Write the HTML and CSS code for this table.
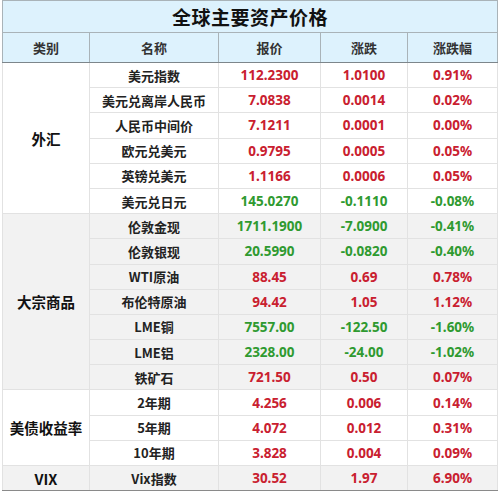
FILE: index.html
```html
<!DOCTYPE html>
<html lang="zh">
<head>
<meta charset="utf-8">
<link rel="stylesheet" href="styles.css">
</head>
<body>
<table class="grid">
  <colgroup>
    <col class="c1"><col class="c2"><col class="c3"><col class="c4"><col class="c5">
  </colgroup>
  <thead>
    <tr class="title"><th colspan="5">全球主要资产价格</th></tr>
    <tr class="head"><th>类别</th><th>名称</th><th>报价</th><th>涨跌</th><th>涨跌幅</th></tr>
  </thead>
  <tbody class="g-white">
    <tr><td class="cat" rowspan="6">外汇</td><td class="name">美元指数</td><td class="up">112.2300</td><td class="up">1.0100</td><td class="up">0.91%</td></tr>
    <tr><td class="name">美元兑离岸人民币</td><td class="up">7.0838</td><td class="up">0.0014</td><td class="up">0.02%</td></tr>
    <tr><td class="name">人民币中间价</td><td class="up">7.1211</td><td class="up">0.0001</td><td class="up">0.00%</td></tr>
    <tr><td class="name">欧元兑美元</td><td class="up">0.9795</td><td class="up">0.0005</td><td class="up">0.05%</td></tr>
    <tr><td class="name">英镑兑美元</td><td class="up">1.1166</td><td class="up">0.0006</td><td class="up">0.05%</td></tr>
    <tr><td class="name">美元兑日元</td><td class="down">145.0270</td><td class="down">-0.1110</td><td class="down">-0.08%</td></tr>
  </tbody>
  <tbody class="g-gray">
    <tr><td class="cat" rowspan="7">大宗商品</td><td class="name">伦敦金现</td><td class="down">1711.1900</td><td class="down">-7.0900</td><td class="down">-0.41%</td></tr>
    <tr><td class="name">伦敦银现</td><td class="down">20.5990</td><td class="down">-0.0820</td><td class="down">-0.40%</td></tr>
    <tr><td class="name">WTI原油</td><td class="up">88.45</td><td class="up">0.69</td><td class="up">0.78%</td></tr>
    <tr><td class="name">布伦特原油</td><td class="up">94.42</td><td class="up">1.05</td><td class="up">1.12%</td></tr>
    <tr><td class="name">LME铜</td><td class="down">7557.00</td><td class="down">-122.50</td><td class="down">-1.60%</td></tr>
    <tr><td class="name">LME铝</td><td class="down">2328.00</td><td class="down">-24.00</td><td class="down">-1.02%</td></tr>
    <tr><td class="name">铁矿石</td><td class="up">721.50</td><td class="up">0.50</td><td class="up">0.07%</td></tr>
  </tbody>
  <tbody class="g-white">
    <tr><td class="cat" rowspan="3">美债收益率</td><td class="name">2年期</td><td class="up">4.256</td><td class="up">0.006</td><td class="up">0.14%</td></tr>
    <tr><td class="name">5年期</td><td class="up">4.072</td><td class="up">0.012</td><td class="up">0.31%</td></tr>
    <tr><td class="name">10年期</td><td class="up">3.828</td><td class="up">0.004</td><td class="up">0.09%</td></tr>
  </tbody>
  <tbody class="g-gray last">
    <tr><td class="cat">VIX</td><td class="name">Vix指数</td><td class="up">30.52</td><td class="up">1.97</td><td class="up">6.90%</td></tr>
  </tbody>
</table>
</body>
</html>
```
FILE: styles.css
```css
html, body {
  margin: 0;
  padding: 0;
  background: #ffffff;
}
body {
  padding: 0 0 0 2px;
  font-family: "Noto Sans", "Noto Sans CJK SC", sans-serif;
}
.grid {
  border-collapse: collapse;
  table-layout: fixed;
  width: 495px;
}
.c1 { width: 87px; }
.c2 { width: 129px; }
.c3 { width: 102px; }
.c4 { width: 87px; }
.c5 { width: 90px; }

.grid th, .grid td {
  padding: 0;
  text-align: center;
  vertical-align: middle;
  white-space: nowrap;
  overflow: hidden;
}
.title th {
  height: 31px;
  background: #ddf2fd;
  border: 1px solid #a9b3b8;
  font-family: "Noto Sans CJK SC", sans-serif;
  font-size: 19px;
  font-weight: 700;
  color: #111;
  letter-spacing: 0.5px;
}
.head th {
  height: 29px;
  background: #ddf2fd;
  border: 1px solid #a9b3b8;
  border-bottom: 1px solid #7d868b;
  font-family: "Noto Sans CJK SC", sans-serif;
  font-size: 13px;
  font-weight: 700;
  color: #333;
}
.grid td {
  height: 24.2px;
  border: 1px solid #e2e2e2;
  font-size: 13.5px;
  font-weight: 700;
}
.g-white td { background: #ffffff; }
.g-gray td { background: #f2f2f2; }
.grid td.name {
  font-family: "Noto Sans CJK SC", sans-serif;
  font-size: 13px;
  color: #222;
}
.grid td.cat {
  font-family: "Noto Sans CJK SC", sans-serif;
  font-size: 14.5px;
  color: #111;
}
.last td { border-bottom: 1px solid #8a8a8a; }
.up { color: #c9202f; }
.down { color: #2f9a30; }
```
